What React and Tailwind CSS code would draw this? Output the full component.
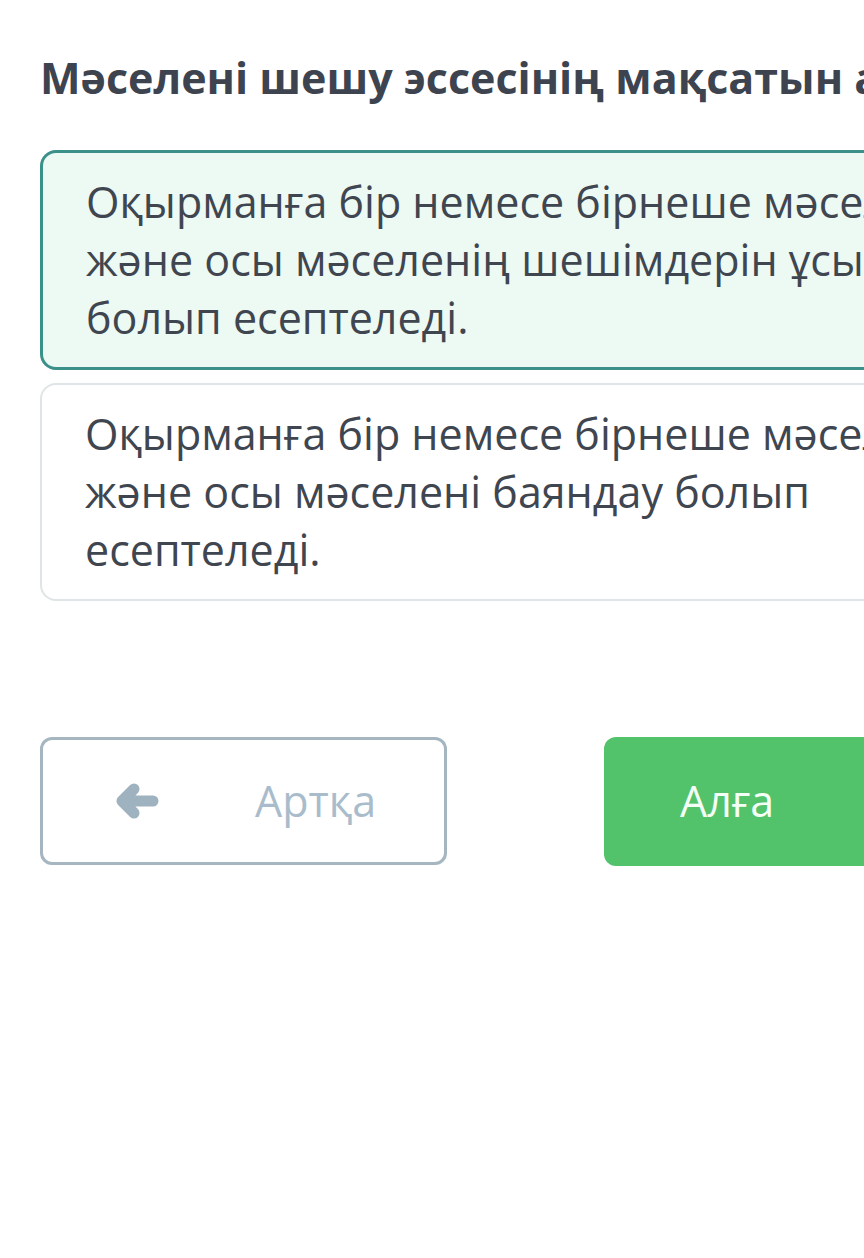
import React from 'react';

const font = { fontFamily: '"Open Sans", "Noto Sans", sans-serif' };

function Option({ selected, lines }) {
  return (
    <div
      className={`rounded-2xl px-[43px] py-[20px] text-[43px] leading-[58px] text-[#3f4650] ${
        selected ? 'border-[3px] border-[#3b9189] bg-[#edf9f3]' : 'border-2 border-[#dfe4e6] bg-white'
      }`}
    >
      {lines.map((l) => (
        <div key={l} className="whitespace-nowrap">{l}</div>
      ))}
    </div>
  );
}

function BackArrow() {
  return (
    <svg width="44" height="38" viewBox="0 0 44 38" className="ml-[72px] text-[#9fb2c0]">
      <path
        d="M19 7 L7 19 L19 31 M7 19 H38"
        fill="none"
        stroke="currentColor"
        strokeWidth="11"
        strokeLinecap="round"
        strokeLinejoin="round"
      />
    </svg>
  );
}

export default function App() {
  return (
    <div className="w-[864px] h-[1258px] overflow-hidden bg-white" style={font}>
      <div className="w-[1240px] px-10 pt-[52px]">
        <h1 className="text-[43px] font-bold leading-[52px] text-[#3d4450] whitespace-nowrap">
          Мəселені шешу эссесінің мақсатын анықтаңыз
        </h1>

        <div className="mt-[46px] flex flex-col gap-[13px] w-[1000px]">
          <Option
            selected
            lines={[
              'Оқырманға бір немесе бірнеше мəселені таныстыру',
              'және осы мəселенің шешімдерін ұсыну',
              'болып есептеледі.',
            ]}
          />
          <Option
            lines={[
              'Оқырманға бір немесе бірнеше мəселені таныстыру',
              'және осы мəселені баяндау болып',
              'есептеледі.',
            ]}
          />
        </div>

        <div className="mt-[136px] flex gap-[157px]">
          <button className="w-[407px] h-[128px] rounded-xl border-[3px] border-[#a5b6c1] bg-white flex items-center text-[43px] text-[#a9bccb]">
            <BackArrow />
            <span className="ml-[96px]">Артқа</span>
          </button>
          <button className="w-[407px] h-[129px] rounded-xl bg-[#52c26b] flex items-center text-[43px] text-[#f4fff6]">
            <span className="ml-[76px]">Алға</span>
          </button>
        </div>
      </div>
    </div>
  );
}
